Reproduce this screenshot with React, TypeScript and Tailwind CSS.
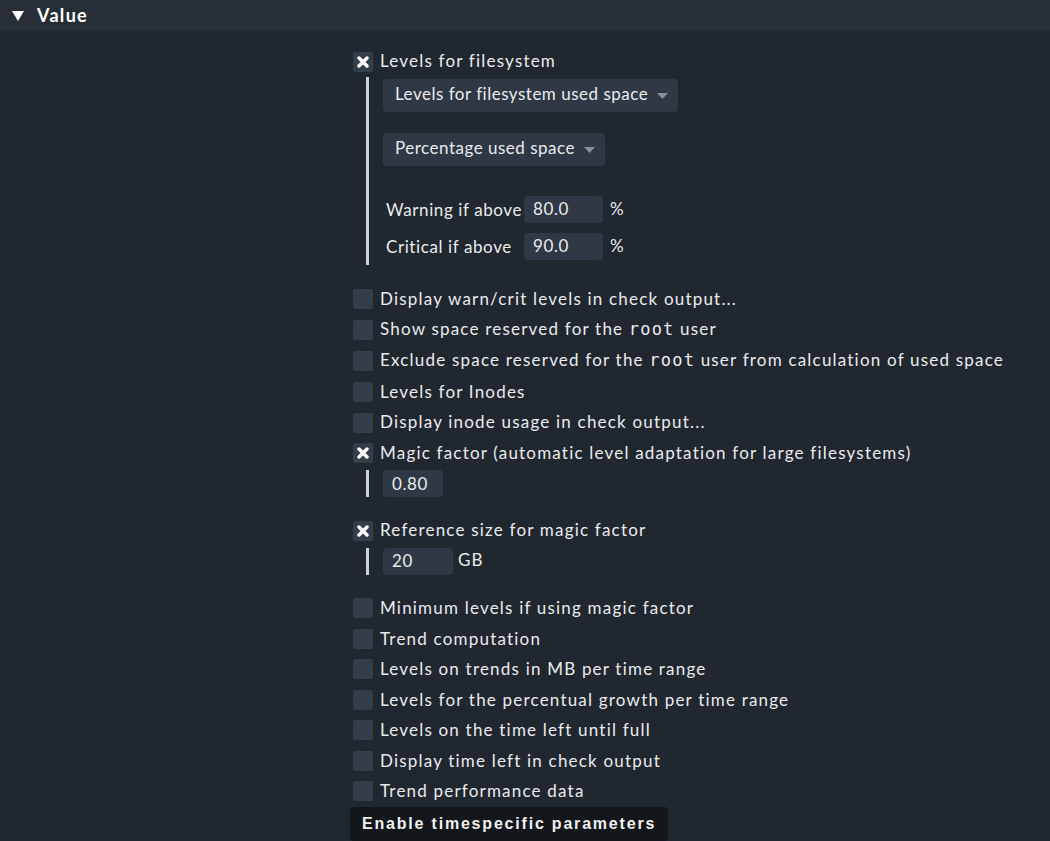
import React from "react";

const font = { fontFamily: "Lato, 'Noto Sans', sans-serif" };

function Cross() {
  return (
    <svg width="12" height="12" viewBox="0 0 12 12">
      <path d="M2 2 L10 10 M10 2 L2 10" stroke="#ffffff" strokeWidth="3.4" strokeLinecap="round" />
    </svg>
  );
}

function Check({ checked, children, h = "h-[30.8px]" }: { checked?: boolean; children: React.ReactNode; h?: string }) {
  return (
    <div className={`flex items-center gap-[7px] ${h}`}>
      <div className="w-[20px] h-[20px] rounded-[2px] bg-[#343d4a] flex items-center justify-center shrink-0">
        {checked && <Cross />}
      </div>
      <span className="whitespace-nowrap -mt-[1px]">{children}</span>
    </div>
  );
}

function Dropdown({ label }: { label: string }) {
  return (
    <div className="inline-flex items-center h-[33px] rounded-[4px] bg-[#2f3844] pl-[12px] pr-[10px] gap-[9px] w-fit tracking-[0.5px]">
      <span className="-mt-[3px]">{label}</span>
      <svg width="11" height="6" viewBox="0 0 11 6">
        <path d="M0 0 H11 L5.5 6 Z" fill="#8a8f96" />
      </svg>
    </div>
  );
}

function Field({ value, w }: { value: string; w: string }) {
  return (
    <div className={`h-[27px] ${w} shrink-0 rounded-[4px] bg-[#2f3844] flex items-center px-[9px] tracking-[0.6px]`}>
      <span className="-mt-[1px]">{value}</span>
    </div>
  );
}

const Mono = ({ children }: { children: React.ReactNode }) => (
  <span className="font-['DejaVu_Sans_Mono',monospace] text-[17px]">{children}</span>
);

const trend = [
  "Minimum levels if using magic factor",
  "Trend computation",
  "Levels on trends in MB per time range",
  "Levels for the percentual growth per time range",
  "Levels on the time left until full",
  "Display time left in check output",
  "Trend performance data",
];

export default function App() {
  return (
    <div
      className="w-[1050px] h-[841px] bg-[#21272f] text-[#e9ebed] text-[17px] tracking-[1.2px] overflow-hidden"
      style={font}
    >
      <div className="h-[31px] bg-[#272e38] flex items-center pl-[12px] gap-[13px]">
        <svg width="12" height="10" viewBox="0 0 12 10">
          <path d="M0 0 H12 L6 10 Z" fill="#ffffff" />
        </svg>
        <span className="font-bold text-[18px] tracking-[1.3px] text-white">Value</span>
      </div>

      <div className="flex flex-col pl-[353px] pt-[15px]">
        <Check checked h="h-[31px]">
          Levels for filesystem
        </Check>
        <div className="ml-[13px] border-l-[3px] border-[#cfd0d1] pl-[14px] pt-[2px] pb-[5px] flex flex-col">
          <Dropdown label="Levels for filesystem used space" />
          <div className="mt-[21px]">
            <Dropdown label="Percentage used space" />
          </div>
          <div className="flex items-center mt-[30px] pl-[3px]">
            <span className="w-[138px] shrink-0 whitespace-nowrap tracking-[0.6px]">Warning if above</span>
            <Field value="80.0" w="w-[79px]" />
            <span className="ml-[7px] -mt-[2px]">%</span>
          </div>
          <div className="flex items-center mt-[10px] pl-[3px]">
            <span className="w-[138px] shrink-0 whitespace-nowrap tracking-[0.6px]">Critical if above</span>
            <Field value="90.0" w="w-[79px]" />
            <span className="ml-[7px] -mt-[2px]">%</span>
          </div>
        </div>

        <div className="mt-[19px]">
          <Check>Display warn/crit levels in check output...</Check>
          <Check>
            Show space reserved for the <Mono>root</Mono> user
          </Check>
          <Check>
            Exclude space reserved for the <Mono>root</Mono> user from calculation of used space
          </Check>
          <Check>Levels for Inodes</Check>
          <Check>Display inode usage in check output...</Check>
          <Check checked>Magic factor (automatic level adaptation for large filesystems)</Check>
        </div>
        <div className="ml-[13px] border-l-[3px] border-[#cfd0d1] pl-[14px] mt-[1.5px] flex items-center">
          <Field value="0.80" w="w-[60px]" />
        </div>

        <div className="mt-[18px]">
          <Check checked>Reference size for magic factor</Check>
        </div>
        <div className="ml-[13px] border-l-[3px] border-[#cfd0d1] pl-[14px] mt-[2px] flex items-center">
          <Field value="20" w="w-[70px]" />
          <span className="ml-[5px] -mt-[4px]">GB</span>
        </div>

        <div className="mt-[18px]">
          {trend.map((t) => (
            <Check key={t} h="h-[30.5px]">
              {t}
            </Check>
          ))}
        </div>

        <div className="-ml-[3px] w-fit h-[34px] rounded-[4px] bg-[#13171c] px-[12px] flex items-center font-bold text-[16px] tracking-[1.8px] text-[#f0f0f0] font-['Liberation_Sans',Arial,sans-serif]">
          Enable timespecific parameters
        </div>
      </div>
    </div>
  );
}
